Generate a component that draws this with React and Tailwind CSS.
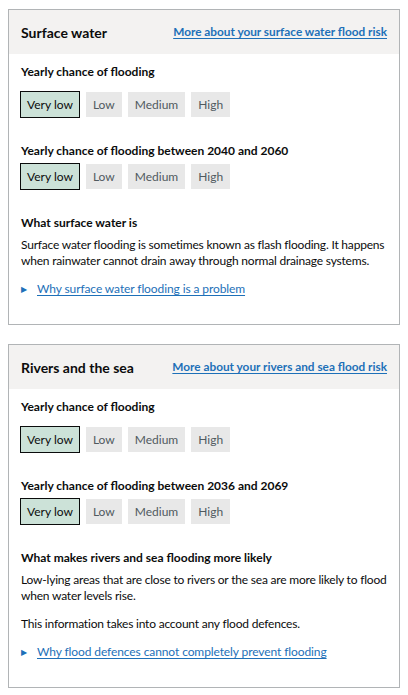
import React from "react";

const LEVELS = ["Very low", "Low", "Medium", "High"];

function RiskScale({ current, className = "" }) {
  return (
    <div className={`flex gap-[6px] ${className}`}>
      {LEVELS.map((l) =>
        l === current ? (
          <div
            key={l}
            className="h-[27px] px-[6px] flex items-center border-[1.5px] border-[#0b0c0c] bg-[#cce2d8] text-[12px] text-[#0b0c0c]"
          >
            {l}
          </div>
        ) : (
          <div
            key={l}
            className="h-[25px] mt-[1px] px-[7px] flex items-center bg-[#e8e8e8] text-[12px] text-[#505a5f]"
          >
            {l}
          </div>
        )
      )}
    </div>
  );
}

function Heading({ children, className = "" }) {
  return (
    <div className={`text-[12px] leading-[20px] font-bold text-[#0b0c0c] ${className}`}>
      {children}
    </div>
  );
}

function DetailsLink({ children }) {
  return (
    <div className="mt-[10px] flex items-center h-[20px] text-[12px] tracking-[-0.1px]">
      <span className="text-[#1d70b8] text-[8px] w-[16px] leading-none">▶</span>
      <a className="text-[#1d70b8] underline underline-offset-2 decoration-1">{children}</a>
    </div>
  );
}

function Card({ title, link, future, aboutTitle, paragraphs, details }) {
  return (
    <section className="border border-[#b1b4b6]">
      <header className="h-[44px] bg-[#f3f2f1] flex items-center justify-between pl-3 pr-3 whitespace-nowrap">
        <h2 className="text-[14px] font-bold text-[#0b0c0c]">{title}</h2>
        <a className="text-[11.8px] font-bold text-[#1d70b8] underline underline-offset-2 decoration-1">
          {link}
        </a>
      </header>
      <div className="px-3 pt-2 pb-[25px]">
        <Heading>Yearly chance of flooding</Heading>
        <RiskScale current="Very low" className="mt-[9px] -ml-px" />
        <Heading className="mt-[23px]">{future}</Heading>
        <RiskScale current="Very low" className="mt-[2px] -ml-px" />
        <Heading className="mt-[23px]">{aboutTitle}</Heading>
        {paragraphs.map((p, i) => (
          <p
            key={i}
            className={`text-[12px] leading-[16px] tracking-[-0.2px] text-[#0b0c0c] ${i === 0 ? "mt-[4px]" : "mt-[12px]"}`}
          >
            {p}
          </p>
        ))}
        <DetailsLink>{details}</DetailsLink>
      </div>
    </section>
  );
}

export default function App() {
  return (
    <div
      className="bg-white w-[408px] min-h-[695px] pl-2 pr-2 pt-[9px] flex flex-col gap-[19px]"
      style={{ fontFamily: 'Lato, Arial, sans-serif' }}
    >
      <Card
        title="Surface water"
        link="More about your surface water flood risk"
        future="Yearly chance of flooding between 2040 and 2060"
        aboutTitle="What surface water is"
        paragraphs={[
          "Surface water flooding is sometimes known as flash flooding. It happens when rainwater cannot drain away through normal drainage systems.",
        ]}
        details="Why surface water flooding is a problem"
      />
      <Card
        title="Rivers and the sea"
        link="More about your rivers and sea flood risk"
        future="Yearly chance of flooding between 2036 and 2069"
        aboutTitle="What makes rivers and sea flooding more likely"
        paragraphs={[
          "Low-lying areas that are close to rivers or the sea are more likely to flood when water levels rise.",
          "This information takes into account any flood defences.",
        ]}
        details="Why flood defences cannot completely prevent flooding"
      />
    </div>
  );
}
